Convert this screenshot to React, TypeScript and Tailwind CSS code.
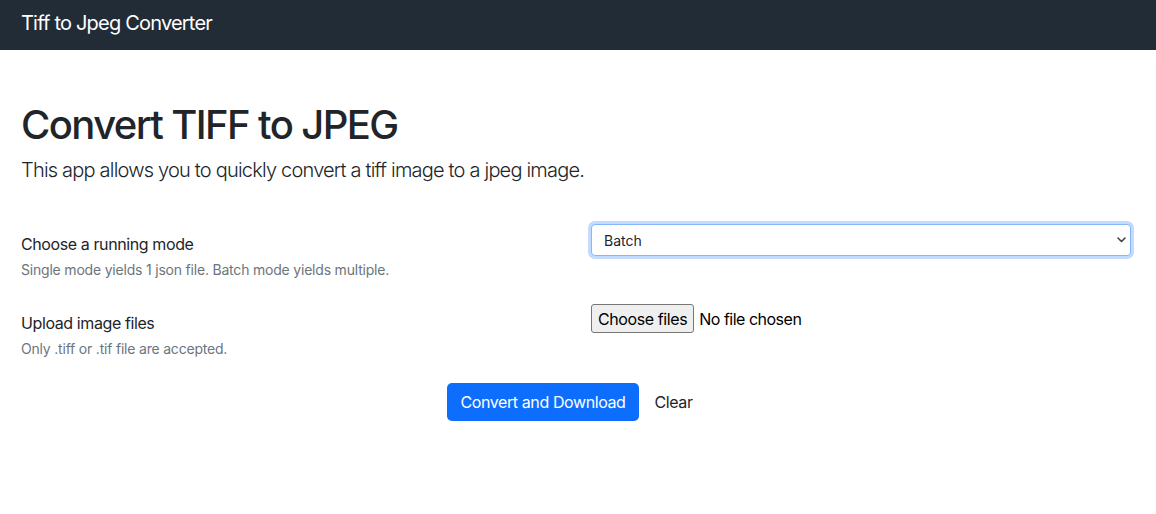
import { useState } from 'react';

export default function App() {
  const [mode, setMode] = useState('Batch');

  return (
    <div className="min-h-screen bg-white text-[#212529]" style={{ fontFamily: 'Inter, "Noto Sans", sans-serif' }}>
      {/* Navbar */}
      <nav className="h-[50px] bg-[#222c36] flex items-center px-[21px] pb-[4px]">
        <span className="text-white text-[20px] leading-none tracking-[-0.8px]">Tiff to Jpeg Converter</span>
      </nav>

      <div className="px-[21px] pt-[51px]">
        {/* Header */}
        <h1 className="text-[40px] font-medium leading-[1.2] tracking-[-1.6px] mb-[6px]">Convert TIFF to JPEG</h1>
        <p className="text-[20px] font-light leading-[1.5] tracking-[-0.8px]">
          This app allows you to quickly convert a tiff image to a jpeg image.
        </p>

        {/* Running mode */}
        <div className="flex mt-[39px]">
          <div className="w-[570px] pt-[8px]">
            <label className="block text-[16px] leading-[24px] tracking-[-0.4px]">Choose a running mode</label>
            <p className="text-[14px] text-[#6c757d] mt-[4px] leading-[20px] tracking-[-0.2px]">
              Single mode yields 1 json file. Batch mode yields multiple.
            </p>
          </div>
          <div className="w-[540px] relative">
            <select
              value={mode}
              onChange={(e) => setMode(e.target.value)}
              className="w-full h-[32px] appearance-none bg-white border border-[#86b7fe] rounded-[4px] pl-[12px] pr-8 text-[14px] text-[#212529] outline-none shadow-[0_0_0_3px_rgba(13,110,253,0.25)]"
            >
              <option>Single</option>
              <option>Batch</option>
            </select>
            <svg className="absolute right-[5px] top-[13px] w-[9px] h-[6px] pointer-events-none" viewBox="0 0 9 6" fill="none">
              <path d="M1 1 L4.5 4.5 L8 1" stroke="#444" strokeWidth="1.6" strokeLinecap="round" strokeLinejoin="round" />
            </svg>
          </div>
        </div>

        {/* Upload */}
        <div className="flex mt-[24px]">
          <div className="w-[570px] pt-[7px]">
            <label className="block text-[16px] leading-[24px] tracking-[-0.4px]">Upload image files</label>
            <p className="text-[14px] text-[#6c757d] mt-[4px] leading-[20px] tracking-[-0.2px]">Only .tiff or .tif file are accepted.</p>
          </div>
          <div className="flex items-start">
            <div className="flex items-center">
              <button className="h-[29px] px-[6px] bg-[#efefef] border border-[#767676] rounded-[3px] text-[16px] text-black leading-none tracking-[-0.4px]">
                Choose files
              </button>
              <span className="ml-[5px] text-[16px] text-black tracking-[-0.5px]">No file chosen</span>
            </div>
          </div>
        </div>

        {/* Actions */}
        <div className="flex justify-center items-center mt-[24px] pr-[4px]">
          <button className="h-[38px] px-[13px] bg-[#0d6efd] text-white text-[16px] rounded-[5px] tracking-[-0.4px]">Convert and Download</button>
          <button className="h-[38px] px-[12px] ml-[4px] text-[16px] text-[#212529] tracking-[-0.4px]">Clear</button>
        </div>
      </div>
    </div>
  );
}
